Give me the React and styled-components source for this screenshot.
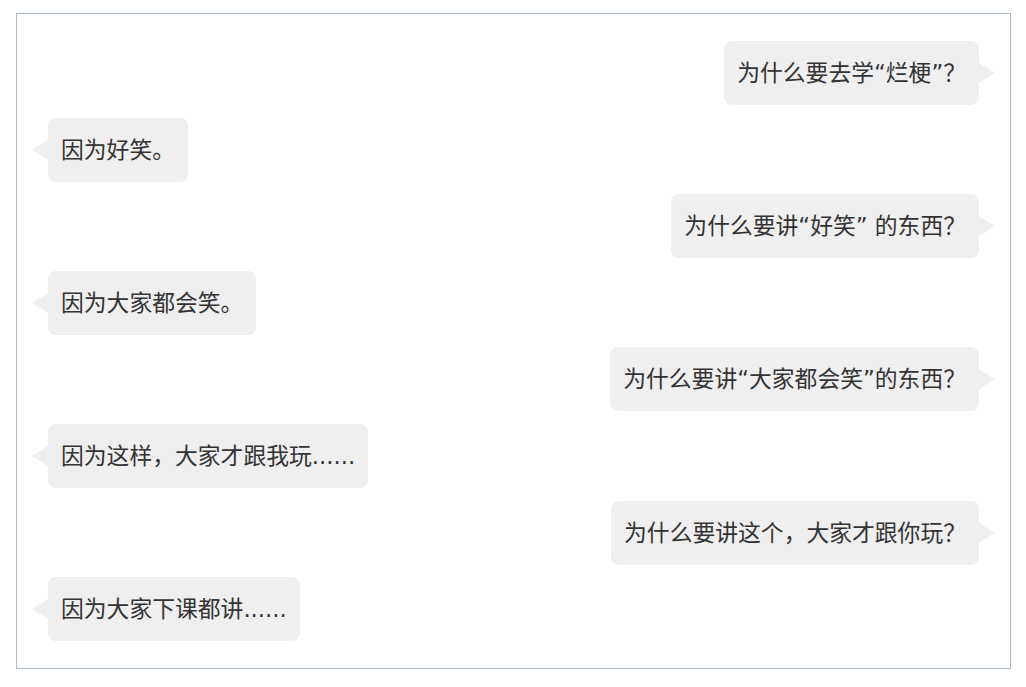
import React from 'react';
import styled, { createGlobalStyle, css } from 'styled-components';

const GlobalStyle = createGlobalStyle`
  html, body {
    margin: 0;
    padding: 0;
    background: #ffffff;
  }
  body {
    font-family: "DejaVu Sans", "Noto Sans CJK SC", sans-serif;
  }
`;

const ChatBox = styled.div`
  box-sizing: border-box;
  width: 995px;
  height: 656px;
  margin: 13px 0 0 16px;
  border: 1px solid #a9b9c6;
  padding: 27px 31px 0;
  display: flex;
  flex-direction: column;
  gap: 12.6px;
`;

const Row = styled.div`
  display: flex;
  justify-content: ${(p) => (p.$side === 'right' ? 'flex-end' : 'flex-start')};
`;

const Bubble = styled.div`
  position: relative;
  background: #efefef;
  color: #333333;
  font-size: 22.8px;
  line-height: 40px;
  padding: 12px 13px;
  border-radius: 8px;
  white-space: nowrap;

  &::before {
    content: '';
    position: absolute;
    top: 22px;
    width: 0;
    height: 0;
    border-style: solid;
    ${(p) =>
      p.$side === 'right'
        ? css`
            right: -16px;
            border-width: 10px 0 10px 16px;
            border-color: transparent transparent transparent #efefef;
          `
        : css`
            left: -16px;
            border-width: 10px 16px 10px 0;
            border-color: transparent #efefef transparent transparent;
          `}
  }
`;

const messages = [
  { side: 'right', text: '为什么要去学“烂梗”？' },
  { side: 'left', text: '因为好笑。' },
  { side: 'right', text: '为什么要讲“好笑” 的东西？' },
  { side: 'left', text: '因为大家都会笑。' },
  { side: 'right', text: '为什么要讲“大家都会笑”的东西？' },
  { side: 'left', text: '因为这样，大家才跟我玩......' },
  { side: 'right', text: '为什么要讲这个，大家才跟你玩？' },
  { side: 'left', text: '因为大家下课都讲......' },
];

const App = () => (
  <>
    <GlobalStyle />
    <ChatBox>
      {messages.map((m, i) => (
        <Row key={i} $side={m.side}>
          <Bubble $side={m.side}>{m.text}</Bubble>
        </Row>
      ))}
    </ChatBox>
  </>
);

export default App;
